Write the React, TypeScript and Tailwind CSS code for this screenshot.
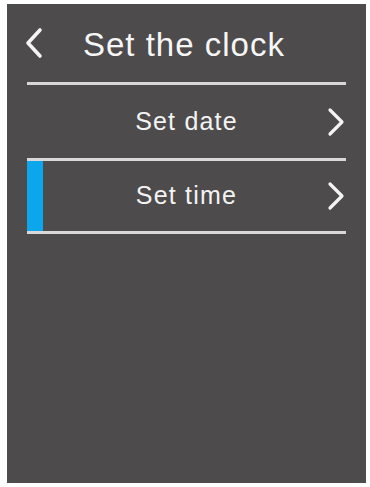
import React from "react"

const font = { fontFamily: "'Liberation Sans', Arial, sans-serif" }

function ChevronLeft() {
  return (
    <svg width="20" height="32" viewBox="0 0 20 32" fill="none">
      <path d="M16 3 L4 16 L16 29" stroke="#f4f4f4" strokeWidth="3.6" strokeLinecap="round" strokeLinejoin="round" />
    </svg>
  )
}

function ChevronRight() {
  return (
    <svg width="18" height="30" viewBox="0 0 18 30" fill="none">
      <path d="M3 3 L15 15 L3 27" stroke="#f4f4f4" strokeWidth="3.2" strokeLinecap="round" strokeLinejoin="round" />
    </svg>
  )
}

function MenuRow({ label, active, tall }: { label: string; active?: boolean; tall?: boolean }) {
  return (
    <div className={`grid grid-cols-[24px_1fr_24px] ${tall ? "h-[73px]" : "h-[70px]"}`}>
      <div className="flex">
        {active && <div className="w-[16px] bg-[#0ba6ec]" />}
      </div>
      <div className="flex items-center justify-center text-[25px] tracking-[1.2px] text-[#f3f3f3]" style={font}>
        {label}
      </div>
      <div className="flex items-center justify-end pr-[1px]">
        <ChevronRight />
      </div>
    </div>
  )
}

export default function App() {
  return (
    <div className="w-[370px] h-[487px] bg-white pl-[7px] pt-[4px]">
      <div className="w-[359px] h-[479px] bg-[#4d4b4c] px-[20px]">
        <div className="flex items-center h-[78px] pt-[2px]">
          <div className="ml-[-3px] mt-[-2px]">
            <ChevronLeft />
          </div>
          <span className="ml-[39px] text-[33px] tracking-[1px] text-[#f6f6f6] leading-none" style={font}>
            Set the clock
          </span>
        </div>
        <div className="h-[3px] bg-[#d8d8d8]" />
        <MenuRow label="Set date" tall />
        <div className="h-[3px] bg-[#d8d8d8]" />
        <MenuRow label="Set time" active />
        <div className="h-[3px] bg-[#d8d8d8]" />
      </div>
    </div>
  )
}
